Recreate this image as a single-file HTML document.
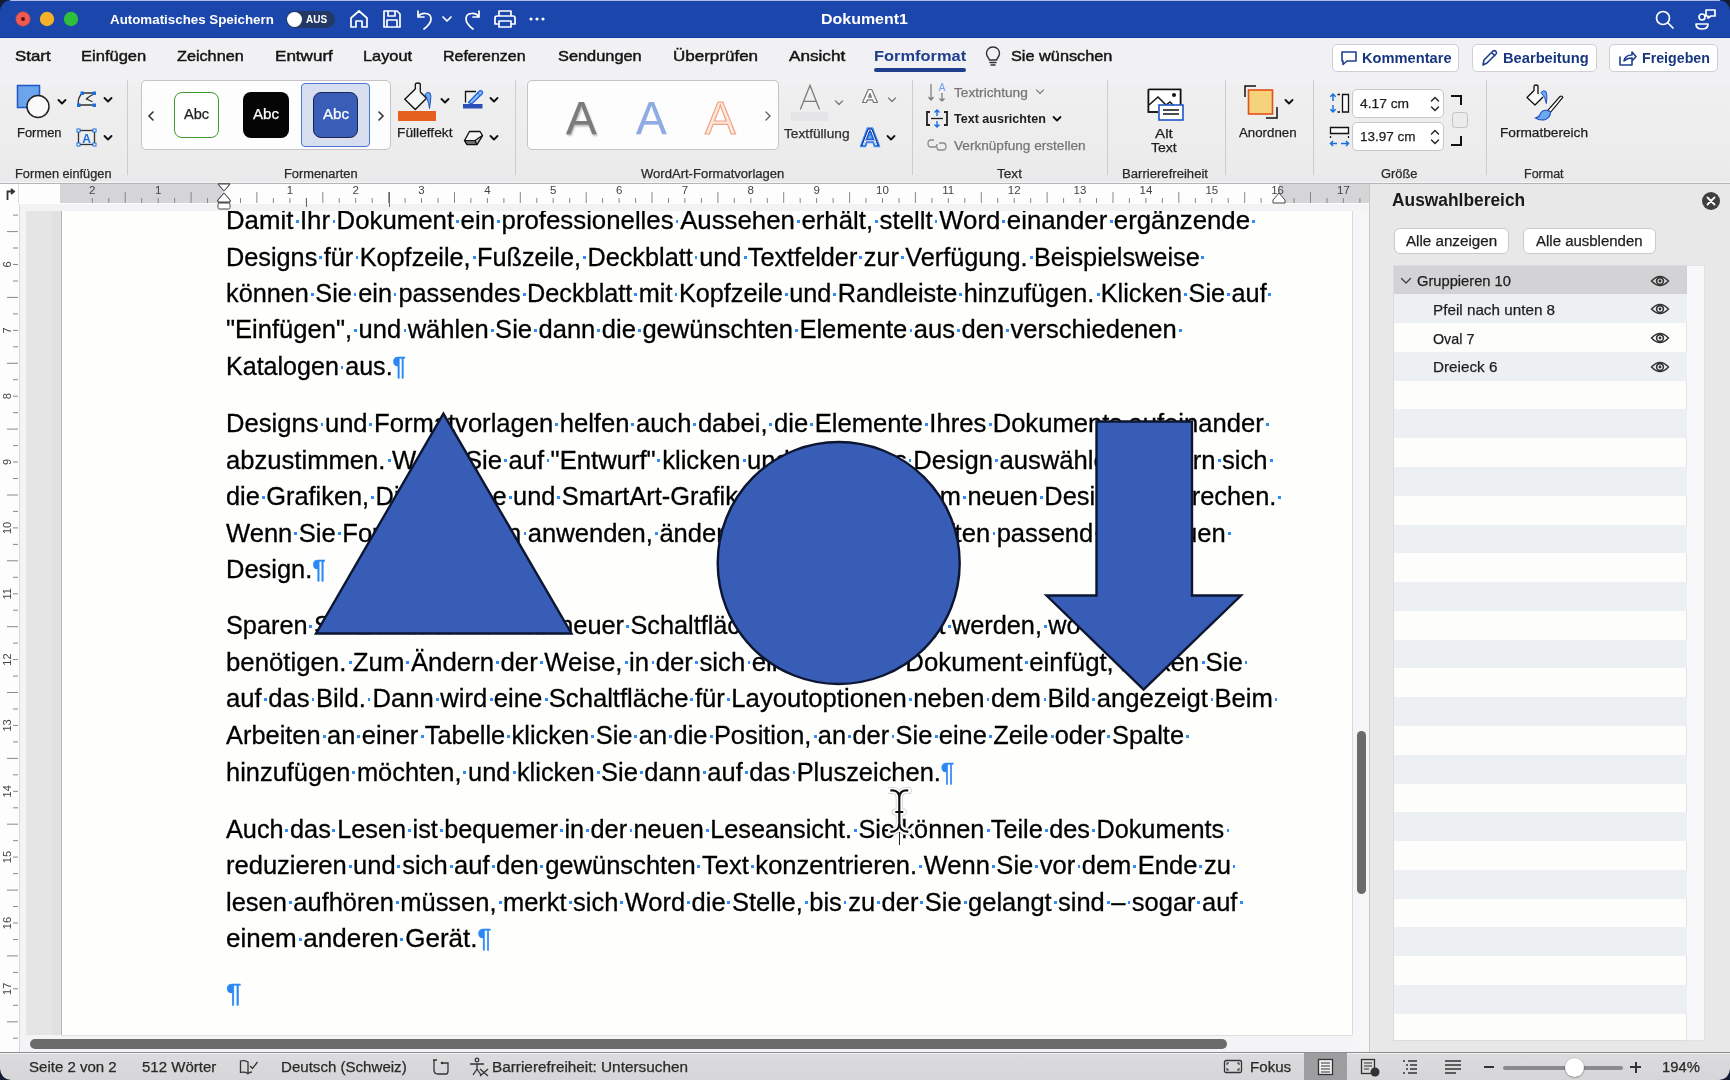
<!DOCTYPE html>
<html><head><meta charset="utf-8"><title>Word</title>
<style>
html,body{margin:0;padding:0}
body{width:1730px;height:1080px;overflow:hidden;position:relative;background:#e9e9e9;font-family:'Liberation Sans',sans-serif;}
i{display:inline-block;width:6.4px;height:3px;background:linear-gradient(90deg,transparent 2.1px,#2f8cf2 2.1px,#2f8cf2 4.9px,transparent 4.9px);vertical-align:6.3px}
i.p{display:inline;width:auto;height:auto;border:0;background:none;vertical-align:baseline;font-style:normal;color:#2a88f4;-webkit-text-stroke:0.4px #2a88f4}
#w{position:absolute;left:0;top:0;width:1730px;height:1080px;will-change:transform}
</style></head><body><div id="w">
<div style="position:absolute;left:0.0px;top:0.0px;width:1730.0px;height:38.0px;background:#1b46ab;"></div>
<div style="position:absolute;left:0.0px;top:37.0px;width:1730.0px;height:1.0px;background:#1538a0;"></div>
<svg style="position:absolute;left:14.0px;top:10.0px;" width="66" height="18" viewBox="0 0 66 18"><circle cx="9" cy="9" r="7.2" fill="#ee5a4f" stroke="#d0463c" stroke-width="0.6"/><circle cx="9" cy="9" r="2" fill="#5a1410"/><circle cx="33" cy="9" r="7.2" fill="#f5b12a"/><circle cx="57" cy="9" r="7.2" fill="#2fbf3c"/></svg>
<div id="f0" class="fit" style="position:absolute;left:110.0px;top:12.6px;font-size:13.50px;line-height:1;white-space:pre;color:#ffffff;font-weight:bold;transform:scaleX(0.9880);transform-origin:0 0;">Automatisches Speichern</div>
<div style="position:absolute;left:286.0px;top:11.0px;width:49.0px;height:17.0px;background:#243866;border-radius:9px;"></div>
<div style="position:absolute;left:287.0px;top:12.0px;width:15.0px;height:15.0px;background:#ffffff;border-radius:50%;"></div>
<div style="position:absolute;left:306.0px;top:15.0px;font-size:10.00px;line-height:1;white-space:pre;color:#ffffff;font-weight:bold;">AUS</div>
<svg style="position:absolute;left:348.0px;top:8.0px;" width="22" height="22" viewBox="0 0 22 22"><path d="M3 10 L11 3 L19 10 V19 H14 V13 H8 V19 H3 Z" fill="none" stroke="#ffffff" stroke-width="1.7" stroke-linejoin="round" stroke-linecap="round"/></svg>
<svg style="position:absolute;left:381.0px;top:8.0px;" width="22" height="22" viewBox="0 0 22 22"><path d="M3 3 H16 L19 6 V19 H3 Z M7 3 V8 H14 V3 M6 19 V12 H16 V19" fill="none" stroke="#ffffff" stroke-width="1.7" stroke-linejoin="round" stroke-linecap="round"/></svg>
<svg style="position:absolute;left:413.0px;top:7.0px;" width="24" height="24" viewBox="0 0 24 24"><path d="M5 4 V10 H11 M5 10 C8 5 18 5 18 12 C18 16 15 19 11 22" fill="none" stroke="#ffffff" stroke-width="1.7" stroke-linejoin="round" stroke-linecap="round"/></svg>
<svg style="position:absolute;left:441.0px;top:14.0px;" width="12" height="10" viewBox="0 0 12 10"><path d="M2 3 L6 7 L10 3" fill="none" stroke="#ffffff" stroke-width="1.7" stroke-linejoin="round" stroke-linecap="round"/></svg>
<svg style="position:absolute;left:460.0px;top:7.0px;" width="24" height="24" viewBox="0 0 24 24"><path d="M19 4 V10 H13 M19 10 C16 5 6 5 6 12 C6 16 9 19 13 22" fill="none" stroke="#ffffff" stroke-width="1.7" stroke-linejoin="round" stroke-linecap="round"/></svg>
<svg style="position:absolute;left:493.0px;top:8.0px;" width="24" height="22" viewBox="0 0 24 22"><path d="M6 8 V3 H18 V8 M4 8 H20 Q22 8 22 10 V16 H18 M6 16 H2 V10 Q2 8 4 8 M6 13 H18 V19 H6 Z" fill="none" stroke="#ffffff" stroke-width="1.7" stroke-linejoin="round" stroke-linecap="round"/></svg>
<svg style="position:absolute;left:528.0px;top:15.0px;" width="20" height="8" viewBox="0 0 20 8"><circle cx="3" cy="4" r="1.6" fill="#fff"/><circle cx="9" cy="4" r="1.6" fill="#fff"/><circle cx="15" cy="4" r="1.6" fill="#fff"/></svg>
<div id="f1" class="fit" style="position:absolute;left:821.0px;top:12.2px;font-size:14.50px;line-height:1;white-space:pre;color:#ffffff;font-weight:bold;transform:scaleX(1.1013);transform-origin:0 0;">Dokument1</div>
<svg style="position:absolute;left:1654.0px;top:9.0px;" width="22" height="22" viewBox="0 0 22 22"><circle cx="9" cy="9" r="6.5" fill="none" stroke="#ffffff" stroke-width="1.7" stroke-linejoin="round" stroke-linecap="round"/><path d="M14 14 L19 19" fill="none" stroke="#ffffff" stroke-width="1.7" stroke-linejoin="round" stroke-linecap="round"/></svg>
<svg style="position:absolute;left:1694.0px;top:7.0px;" width="24" height="24" viewBox="0 0 24 24"><circle cx="8" cy="10" r="3" fill="none" stroke="#ffffff" stroke-width="1.7" stroke-linejoin="round" stroke-linecap="round"/><path d="M2 17 H14 Q14 22 8 22 Q2 22 2 17 Z" fill="none" stroke="#ffffff" stroke-width="1.7" stroke-linejoin="round" stroke-linecap="round"/><path d="M12 3 H21 V9 H17 L14 11 V9 H12 Z" fill="none" stroke="#ffffff" stroke-width="1.7" stroke-linejoin="round" stroke-linecap="round"/></svg>
<div style="position:absolute;left:0.0px;top:38.0px;width:1730.0px;height:48.0px;background:#f1f1f3;"></div>
<div id="f2" class="fit" style="position:absolute;left:15.0px;top:47.7px;font-size:15.00px;line-height:1;white-space:pre;color:#141414;font-weight:normal;transform:scaleX(1.1250);transform-origin:0 0;-webkit-text-stroke:0.45px #141414;">Start</div>
<div id="f3" class="fit" style="position:absolute;left:81.0px;top:47.7px;font-size:15.00px;line-height:1;white-space:pre;color:#141414;font-weight:normal;transform:scaleX(1.1017);transform-origin:0 0;-webkit-text-stroke:0.45px #141414;">Einfügen</div>
<div id="f4" class="fit" style="position:absolute;left:177.0px;top:47.7px;font-size:15.00px;line-height:1;white-space:pre;color:#141414;font-weight:normal;transform:scaleX(1.0806);transform-origin:0 0;-webkit-text-stroke:0.45px #141414;">Zeichnen</div>
<div id="f5" class="fit" style="position:absolute;left:275.0px;top:47.7px;font-size:15.00px;line-height:1;white-space:pre;color:#141414;font-weight:normal;transform:scaleX(1.1373);transform-origin:0 0;-webkit-text-stroke:0.45px #141414;">Entwurf</div>
<div id="f6" class="fit" style="position:absolute;left:363.0px;top:47.7px;font-size:15.00px;line-height:1;white-space:pre;color:#141414;font-weight:normal;transform:scaleX(1.0889);transform-origin:0 0;-webkit-text-stroke:0.45px #141414;">Layout</div>
<div id="f7" class="fit" style="position:absolute;left:443.0px;top:47.7px;font-size:15.00px;line-height:1;white-space:pre;color:#141414;font-weight:normal;transform:scaleX(1.0641);transform-origin:0 0;-webkit-text-stroke:0.45px #141414;">Referenzen</div>
<div id="f8" class="fit" style="position:absolute;left:558.0px;top:47.7px;font-size:15.00px;line-height:1;white-space:pre;color:#141414;font-weight:normal;transform:scaleX(1.0909);transform-origin:0 0;-webkit-text-stroke:0.45px #141414;">Sendungen</div>
<div id="f9" class="fit" style="position:absolute;left:673.0px;top:47.7px;font-size:15.00px;line-height:1;white-space:pre;color:#141414;font-weight:normal;transform:scaleX(1.1333);transform-origin:0 0;-webkit-text-stroke:0.45px #141414;">Überprüfen</div>
<div id="f10" class="fit" style="position:absolute;left:789.0px;top:47.7px;font-size:15.00px;line-height:1;white-space:pre;color:#141414;font-weight:normal;transform:scaleX(1.1429);transform-origin:0 0;-webkit-text-stroke:0.45px #141414;">Ansicht</div>
<div id="f11" class="fit" style="position:absolute;left:874.0px;top:47.7px;font-size:15.00px;line-height:1;white-space:pre;color:#1f3f8e;font-weight:bold;transform:scaleX(1.0952);transform-origin:0 0;">Formformat</div>
<div style="position:absolute;left:874.0px;top:68.0px;width:92.0px;height:3.5px;background:#1f3f8e;border-radius:2px;"></div>
<svg style="position:absolute;left:984.0px;top:45.0px;" width="18" height="22" viewBox="0 0 18 22"><path d="M9 2 C4.5 2 2.5 5.5 2.5 8.5 C2.5 11.5 5 13 5.5 15 H12.5 C13 13 15.5 11.5 15.5 8.5 C15.5 5.5 13.5 2 9 2 Z M6 17.5 H12 M7 20 H11" fill="none" stroke="#333" stroke-width="1.4" stroke-linecap="round"/></svg>
<div id="f12" class="fit" style="position:absolute;left:1011.0px;top:47.7px;font-size:15.00px;line-height:1;white-space:pre;color:#141414;font-weight:normal;transform:scaleX(1.0860);transform-origin:0 0;-webkit-text-stroke:0.45px #141414;">Sie wünschen</div>
<div style="position:absolute;left:1332.0px;top:44.0px;width:127.0px;height:28.0px;background:#ffffff;box-sizing:border-box;border:1px solid #cfcfd3;border-radius:5px;"></div>
<div style="position:absolute;left:1472.0px;top:44.0px;width:125.0px;height:28.0px;background:#ffffff;box-sizing:border-box;border:1px solid #cfcfd3;border-radius:5px;"></div>
<div style="position:absolute;left:1609.0px;top:44.0px;width:109.0px;height:28.0px;background:#ffffff;box-sizing:border-box;border:1px solid #cfcfd3;border-radius:5px;"></div>
<svg style="position:absolute;left:1340.0px;top:49.0px;" width="18" height="18" viewBox="0 0 18 18"><path d="M2 3 H16 V12 H7 L3 15.5 V12 H2 Z" fill="none" stroke="#1f3f8e" stroke-width="1.6" stroke-linejoin="round" stroke-linecap="round"/></svg>
<div id="f13" class="fit" style="position:absolute;left:1362.0px;top:51.1px;font-size:14.00px;line-height:1;white-space:pre;color:#17367f;font-weight:bold;transform:scaleX(1.0465);transform-origin:0 0;">Kommentare</div>
<svg style="position:absolute;left:1479.0px;top:48.0px;" width="20" height="20" viewBox="0 0 20 20"><path d="M4 17 L5 12 L14 3 Q15.5 2 17 3.5 Q18 5 17 6 L8 15 Z M12.5 4.5 L15.8 7.6" fill="none" stroke="#1f3f8e" stroke-width="1.6" stroke-linejoin="round" stroke-linecap="round"/></svg>
<div id="f14" class="fit" style="position:absolute;left:1503.0px;top:51.1px;font-size:14.00px;line-height:1;white-space:pre;color:#17367f;font-weight:bold;transform:scaleX(1.0488);transform-origin:0 0;">Bearbeitung</div>
<svg style="position:absolute;left:1617.0px;top:48.0px;" width="20" height="20" viewBox="0 0 20 20"><path d="M3 9 V17 H15 V13 M7 13 Q8 7 15 7 V4 L19 8.5 L15 13 V10 Q10 10 7 13 Z" fill="none" stroke="#1f3f8e" stroke-width="1.6" stroke-linejoin="round" stroke-linecap="round"/></svg>
<div id="f15" class="fit" style="position:absolute;left:1642.0px;top:51.1px;font-size:14.00px;line-height:1;white-space:pre;color:#17367f;font-weight:bold;transform:scaleX(1.0149);transform-origin:0 0;">Freigeben</div>
<div style="position:absolute;left:0.0px;top:86.0px;width:1730.0px;height:96.0px;background:linear-gradient(#efefef,#ededed 55%,#eaeaec);"></div>
<div style="position:absolute;left:0.0px;top:182.0px;width:1730.0px;height:1.0px;background:#f6f6f6;"></div>
<div style="position:absolute;left:0.0px;top:183.0px;width:1730.0px;height:1.0px;background:#b4b4b6;"></div>
<div style="position:absolute;left:127.0px;top:80.0px;width:1.0px;height:95.0px;background:#cdcdcf;"></div>
<div style="position:absolute;left:515.0px;top:80.0px;width:1.0px;height:95.0px;background:#cdcdcf;"></div>
<div style="position:absolute;left:911.5px;top:80.0px;width:1.0px;height:95.0px;background:#cdcdcf;"></div>
<div style="position:absolute;left:1107.0px;top:80.0px;width:1.0px;height:95.0px;background:#cdcdcf;"></div>
<div style="position:absolute;left:1224.5px;top:80.0px;width:1.0px;height:95.0px;background:#cdcdcf;"></div>
<div style="position:absolute;left:1313.0px;top:80.0px;width:1.0px;height:95.0px;background:#cdcdcf;"></div>
<div style="position:absolute;left:1486.0px;top:80.0px;width:1.0px;height:95.0px;background:#cdcdcf;"></div>
<div id="f16" class="fit" style="position:absolute;left:15.0px;top:167.7px;font-size:12.50px;line-height:1;white-space:pre;color:#2a2a2a;font-weight:normal;transform:scaleX(1.0211);transform-origin:0 0;-webkit-text-stroke:0.25px #2a2a2a;">Formen einfügen</div>
<div id="f17" class="fit" style="position:absolute;left:284.0px;top:167.7px;font-size:12.50px;line-height:1;white-space:pre;color:#2a2a2a;font-weight:normal;transform:scaleX(1.0278);transform-origin:0 0;-webkit-text-stroke:0.25px #2a2a2a;">Formenarten</div>
<div id="f18" class="fit" style="position:absolute;left:641.0px;top:167.7px;font-size:12.50px;line-height:1;white-space:pre;color:#2a2a2a;font-weight:normal;transform:scaleX(1.0438);transform-origin:0 0;-webkit-text-stroke:0.25px #2a2a2a;">WordArt-Formatvorlagen</div>
<div id="f19" class="fit" style="position:absolute;left:997.0px;top:167.7px;font-size:12.50px;line-height:1;white-space:pre;color:#2a2a2a;font-weight:normal;transform:scaleX(1.0870);transform-origin:0 0;-webkit-text-stroke:0.25px #2a2a2a;">Text</div>
<div id="f20" class="fit" style="position:absolute;left:1122.0px;top:167.7px;font-size:12.50px;line-height:1;white-space:pre;color:#2a2a2a;font-weight:normal;transform:scaleX(1.0488);transform-origin:0 0;-webkit-text-stroke:0.25px #2a2a2a;">Barrierefreiheit</div>
<div id="f21" class="fit" style="position:absolute;left:1381.0px;top:167.7px;font-size:12.50px;line-height:1;white-space:pre;color:#2a2a2a;font-weight:normal;transform:scaleX(1.0286);transform-origin:0 0;-webkit-text-stroke:0.25px #2a2a2a;">Größe</div>
<div id="f22" class="fit" style="position:absolute;left:1524.0px;top:167.7px;font-size:12.50px;line-height:1;white-space:pre;color:#2a2a2a;font-weight:normal;transform:scaleX(1.0000);transform-origin:0 0;-webkit-text-stroke:0.25px #2a2a2a;">Format</div>
<svg style="position:absolute;left:15.0px;top:83.0px;" width="40" height="40" viewBox="0 0 40 40"><rect x="2.5" y="2.5" width="22" height="22" fill="#6aa5ee" stroke="#1f56c8" stroke-width="1.5"/><circle cx="23" cy="23.5" r="11" fill="#fafafa" stroke="#222" stroke-width="1.5"/></svg>
<svg style="position:absolute;left:57.0px;top:98.0px;" width="10" height="8" viewBox="0 0 10 8"><path d="M1.5 2 L5 5.5 L8.5 2" fill="none" stroke="#111" stroke-width="1.9" stroke-linecap="round" stroke-linejoin="round"/></svg>
<svg style="position:absolute;left:74.0px;top:88.0px;" width="26" height="22" viewBox="0 0 26 22"><path d="M8 5 H18.5 M19 6.5 Q14 9 12.5 11 L18 13.5 M7 6.5 Q3.5 11 4.5 16.5 M6 17 H18.5" fill="none" stroke="#333" stroke-width="1.3" stroke-linecap="round"/><rect x="6.5" y="3.5" width="3.5" height="3.5" fill="#1a6fe0"/><rect x="18.5" y="3.5" width="3.5" height="3.5" fill="#1a6fe0"/><rect x="3" y="15.5" width="3.5" height="3.5" fill="#1a6fe0"/><rect x="18.5" y="15.5" width="3.5" height="3.5" fill="#1a6fe0"/></svg>
<svg style="position:absolute;left:103.0px;top:96.0px;" width="10" height="8" viewBox="0 0 10 8"><path d="M1.5 2 L5 5.5 L8.5 2" fill="none" stroke="#111" stroke-width="1.9" stroke-linecap="round" stroke-linejoin="round"/></svg>
<div id="f23" class="fit" style="position:absolute;left:17.0px;top:126.1px;font-size:13.50px;line-height:1;white-space:pre;color:#1d1d1d;font-weight:normal;transform:scaleX(0.9574);transform-origin:0 0;-webkit-text-stroke:0.25px #1d1d1d;">Formen</div>
<svg style="position:absolute;left:76.0px;top:128.0px;" width="22" height="19" viewBox="0 0 22 19"><rect x="2.5" y="2.5" width="16" height="14" fill="none" stroke="#333" stroke-width="1.3"/><text x="10.5" y="14.5" font-size="12" font-weight="bold" text-anchor="middle" fill="#1a6fe0" font-family="Liberation Sans">A</text><rect x="1" y="1" width="3" height="3" fill="#fff" stroke="#1a6fe0" stroke-width="1"/><rect x="17" y="1" width="3" height="3" fill="#fff" stroke="#1a6fe0" stroke-width="1"/><rect x="1" y="15" width="3" height="3" fill="#fff" stroke="#1a6fe0" stroke-width="1"/><rect x="17" y="15" width="3" height="3" fill="#fff" stroke="#1a6fe0" stroke-width="1"/></svg>
<svg style="position:absolute;left:103.0px;top:134.0px;" width="10" height="8" viewBox="0 0 10 8"><path d="M1.5 2 L5 5.5 L8.5 2" fill="none" stroke="#111" stroke-width="1.9" stroke-linecap="round" stroke-linejoin="round"/></svg>
<div style="position:absolute;left:141.0px;top:80.0px;width:250.0px;height:70.0px;background:#fdfdfd;box-sizing:border-box;border:1px solid #c4c4c6;border-radius:5px;"></div>
<svg style="position:absolute;left:146.0px;top:110.0px;" width="10" height="12" viewBox="0 0 10 12"><path d="M7 2 L3 6 L7 10" fill="none" stroke="#333" stroke-width="1.6" stroke-linecap="round"/></svg>
<svg style="position:absolute;left:376.0px;top:110.0px;" width="10" height="12" viewBox="0 0 10 12"><path d="M3 2 L7 6 L3 10" fill="none" stroke="#333" stroke-width="1.6" stroke-linecap="round"/></svg>
<div style="position:absolute;left:174.0px;top:92.0px;width:45.0px;height:46.0px;background:#ffffff;box-sizing:border-box;border:1.5px solid #3f9a2e;border-radius:8px;"></div>
<div id="f24" class="fit" style="position:absolute;left:184.0px;top:107.1px;font-size:14.00px;line-height:1;white-space:pre;color:#1d1d1d;font-weight:normal;transform:scaleX(1.0417);transform-origin:0 0;-webkit-text-stroke:0.25px #1d1d1d;">Abc</div>
<div style="position:absolute;left:243.0px;top:92.0px;width:46.0px;height:46.0px;background:#050505;border-radius:8px;"></div>
<div id="f25" class="fit" style="position:absolute;left:253.0px;top:107.1px;font-size:14.00px;line-height:1;white-space:pre;color:#ffffff;font-weight:normal;transform:scaleX(1.0833);transform-origin:0 0;-webkit-text-stroke:0.25px #ffffff;">Abc</div>
<div style="position:absolute;left:301.0px;top:83.0px;width:69.0px;height:64.0px;background:#d6def0;box-sizing:border-box;border:1.2px solid #4a78d0;border-radius:4px;"></div>
<div style="position:absolute;left:313.0px;top:92.0px;width:45.0px;height:46.0px;background:#3a5eb8;box-sizing:border-box;border:1.5px solid #1a2650;border-radius:8px;"></div>
<div id="f26" class="fit" style="position:absolute;left:323.0px;top:107.1px;font-size:14.00px;line-height:1;white-space:pre;color:#ffffff;font-weight:normal;transform:scaleX(1.0833);transform-origin:0 0;-webkit-text-stroke:0.25px #ffffff;">Abc</div>
<svg style="position:absolute;left:390.0px;top:78.0px;" width="50" height="36" viewBox="0 0 50 36"><path d="M15 11 L25.5 21.5 L15 32 L4.5 21.5 Z" fill="none"/><path d="M25.3 13.5 V6.5 Q25.3 5 27.8 5 Q30.3 5 30.3 6.5 V18.7" fill="none" stroke="#111" stroke-width="1.3"/><path d="M25.3 11 L14.8 21.2 L25.3 31.5 L36.5 20.2 L30.3 14" fill="#f7f7f7" stroke="#111" stroke-width="1.4" stroke-linejoin="miter"/><path d="M35 16.5 Q37.5 13 40 15 Q41.5 17.5 40.5 23 L39.5 30.5 Q38.8 25 37.5 22 Q36.5 19 35 16.5 Z" fill="#6aaaf0" stroke="#1f4fc0" stroke-width="1"/></svg>
<div style="position:absolute;left:398.0px;top:111.0px;width:38.0px;height:9.5px;background:#e5601e;"></div>
<svg style="position:absolute;left:440.0px;top:97.0px;" width="10" height="8" viewBox="0 0 10 8"><path d="M1.5 2 L5 5.5 L8.5 2" fill="none" stroke="#111" stroke-width="1.9" stroke-linecap="round" stroke-linejoin="round"/></svg>
<div id="f27" class="fit" style="position:absolute;left:397.0px;top:126.1px;font-size:13.50px;line-height:1;white-space:pre;color:#1d1d1d;font-weight:normal;transform:scaleX(1.0182);transform-origin:0 0;-webkit-text-stroke:0.25px #1d1d1d;">Fülleffekt</div>
<svg style="position:absolute;left:460.0px;top:86.0px;" width="28" height="26" viewBox="0 0 28 26"><path d="M5.5 16.5 V5.5 H16" fill="none" stroke="#111" stroke-width="1.3"/><path d="M8.5 16.5 L19 5.5 Q20.5 4 22 5.2 Q23.3 6.5 22 8 L11.5 18 Z" fill="#8cc0f5" stroke="#1a5fd8" stroke-width="1.3" stroke-linejoin="round"/><path d="M17.5 7 L20.5 10" stroke="#1a5fd8" stroke-width="1"/><rect x="3" y="18" width="19.5" height="4.5" fill="#2a50b8"/></svg>
<svg style="position:absolute;left:489.0px;top:96.0px;" width="10" height="8" viewBox="0 0 10 8"><path d="M1.5 2 L5 5.5 L8.5 2" fill="none" stroke="#111" stroke-width="1.9" stroke-linecap="round" stroke-linejoin="round"/></svg>
<svg style="position:absolute;left:460.0px;top:128.0px;" width="26" height="20" viewBox="0 0 26 20"><path d="M4.5 12.5 L9.5 3.5 H20 L22.5 7.5 L17 16.5 H7 Z" fill="#f6f6f6" stroke="#111" stroke-width="1.4" stroke-linejoin="round"/><path d="M4.5 12.5 H15 L17 16.5 H7 Z" fill="#6e6e6e" stroke="#111" stroke-width="1.2" stroke-linejoin="round"/><path d="M15 12.5 L22.5 7.5 L17 16.5 Z" fill="#c9c9c9" stroke="#111" stroke-width="1.2" stroke-linejoin="round"/></svg>
<svg style="position:absolute;left:489.0px;top:134.0px;" width="10" height="8" viewBox="0 0 10 8"><path d="M1.5 2 L5 5.5 L8.5 2" fill="none" stroke="#111" stroke-width="1.9" stroke-linecap="round" stroke-linejoin="round"/></svg>
<div style="position:absolute;left:527.0px;top:80.0px;width:252.0px;height:70.0px;background:#fdfdfd;box-sizing:border-box;border:1px solid #c4c4c6;border-radius:5px;"></div>
<div style="position:absolute;left:566.0px;top:95.1px;font-size:46.00px;line-height:1;white-space:pre;color:#7b7b7b;font-weight:normal;text-shadow:1px 2px 2px rgba(0,0,0,.25);-webkit-text-stroke:0.25px #7b7b7b;">A</div>
<div style="position:absolute;left:636.0px;top:95.1px;font-size:46.00px;line-height:1;white-space:pre;color:#8eabe3;font-weight:normal;-webkit-text-stroke:0.25px #8eabe3;">A</div>
<div style="position:absolute;left:705.0px;top:95.1px;font-size:46.00px;line-height:1;white-space:pre;color:#fde8de;font-weight:normal;-webkit-text-stroke:1.2px #f2a487;">A</div>
<svg style="position:absolute;left:763.0px;top:110.0px;" width="10" height="12" viewBox="0 0 10 12"><path d="M3 2 L7 6 L3 10" fill="none" stroke="#666" stroke-width="1.4" stroke-linecap="round"/></svg>
<svg style="position:absolute;left:796.0px;top:82.0px;" width="30" height="30" viewBox="0 0 30 30"><path d="M4.3 27.6 L14 3.2 L23.5 27.6 M8 19.3 H20" fill="none" stroke="#7a7a7a" stroke-width="1.3"/></svg>
<div style="position:absolute;left:791.0px;top:111.5px;width:37.0px;height:9.5px;background:#e5e5e7;"></div>
<svg style="position:absolute;left:833.5px;top:98.5px;" width="10" height="8" viewBox="0 0 10 8"><path d="M1.5 2 L5 5.5 L8.5 2" fill="none" stroke="#7a7a7a" stroke-width="1.3" stroke-linecap="round" stroke-linejoin="round"/></svg>
<div id="f28" class="fit" style="position:absolute;left:784.0px;top:126.6px;font-size:13.50px;line-height:1;white-space:pre;color:#2e2e2e;font-weight:normal;transform:scaleX(1.0154);transform-origin:0 0;-webkit-text-stroke:0.25px #2e2e2e;">Textfüllung</div>
<svg style="position:absolute;left:860.0px;top:87.0px;" width="20" height="18" viewBox="0 0 20 18"><path d="M2.5 15.5 L8.3 2.5 H11.7 L17.5 15.5 H13.6 L12.5 12.8 H7.5 L6.4 15.5 Z M8.6 10.2 H11.4 L10 6.5 Z" fill="#fafafa" stroke="#777" stroke-width="1.2" stroke-linejoin="round"/></svg>
<svg style="position:absolute;left:886.5px;top:96.0px;" width="10" height="8" viewBox="0 0 10 8"><path d="M1.5 2 L5 5.5 L8.5 2" fill="none" stroke="#7a7a7a" stroke-width="1.3" stroke-linecap="round" stroke-linejoin="round"/></svg>
<svg style="position:absolute;left:858.0px;top:125.0px;" width="24" height="24" viewBox="0 0 24 24"><path d="M2.5 21.5 L9.5 3 H14.5 L21.5 21.5 H16.5 L15 17.5 H9 L7.5 21.5 Z M10.2 13.5 H13.8 L12 8.5 Z" fill="#1d4fc4" stroke="#3f8df0" stroke-width="1.6" stroke-linejoin="round"/><path d="M5.3 19.8 L10.8 4.8 H13.2 L18.7 19.8 H17.6 L16.1 15.8 H7.9 L6.4 19.8 Z" fill="none" stroke="#fff" stroke-width="1"/><path d="M3.5 21 L10 4 H14 L20.5 21" fill="none" stroke="#0b2a86" stroke-width="0.8"/></svg>
<svg style="position:absolute;left:886.0px;top:134.0px;" width="10" height="8" viewBox="0 0 10 8"><path d="M1.5 2 L5 5.5 L8.5 2" fill="none" stroke="#111" stroke-width="1.8" stroke-linecap="round" stroke-linejoin="round"/></svg>
<svg style="position:absolute;left:926.0px;top:81.0px;" width="22" height="22" viewBox="0 0 22 22"><path d="M5 3 V19 M2.5 16 L5 19 L7.5 16 M16 12 V20 M13.5 17.5 L16 20 L18.5 17.5" fill="none" stroke="#777" stroke-width="1.2"/><text x="16" y="10" font-size="10" text-anchor="middle" fill="#6aa0ee" font-family="Liberation Sans">A</text></svg>
<div id="f29" class="fit" style="position:absolute;left:954.0px;top:85.6px;font-size:13.50px;line-height:1;white-space:pre;color:#757575;font-weight:normal;transform:scaleX(1.0137);transform-origin:0 0;-webkit-text-stroke:0.25px #757575;">Textrichtung</div>
<svg style="position:absolute;left:1035.0px;top:88.0px;" width="10" height="8" viewBox="0 0 10 8"><path d="M1.5 2 L5 5.5 L8.5 2" fill="none" stroke="#888" stroke-width="1.3" stroke-linecap="round" stroke-linejoin="round"/></svg>
<svg style="position:absolute;left:925.0px;top:108.0px;" width="24" height="22" viewBox="0 0 24 22"><path d="M5 4 H2 V17 H5 M19 4 H22 V17 H19" fill="none" stroke="#222" stroke-width="1.8"/><path d="M6 10.5 H18" stroke="#222" stroke-width="1.3"/><path d="M12 2 V8 M9.5 4.5 L12 2 L14.5 4.5 M12 13 V19 M9.5 16.5 L12 19 L14.5 16.5" fill="none" stroke="#1a6fe0" stroke-width="1.4"/></svg>
<div id="f30" class="fit" style="position:absolute;left:954.0px;top:112.1px;font-size:13.50px;line-height:1;white-space:pre;color:#1d1d1d;font-weight:bold;transform:scaleX(0.9293);transform-origin:0 0;">Text ausrichten</div>
<svg style="position:absolute;left:1052.0px;top:115.0px;" width="10" height="8" viewBox="0 0 10 8"><path d="M1.5 2 L5 5.5 L8.5 2" fill="none" stroke="#111" stroke-width="1.8" stroke-linecap="round" stroke-linejoin="round"/></svg>
<svg style="position:absolute;left:926.0px;top:137.0px;" width="22" height="16" viewBox="0 0 22 16"><path d="M8 3 H5 Q2 3 2 6.5 Q2 10 5 10 H9 Q11 10 11 7 M13 6 H17 Q20 6 20 9.5 Q20 13 17 13 H13 Q11 13 11 10" fill="none" stroke="#8a8a8a" stroke-width="1.3"/></svg>
<div id="f31" class="fit" style="position:absolute;left:954.0px;top:138.6px;font-size:13.50px;line-height:1;white-space:pre;color:#757575;font-weight:normal;transform:scaleX(1.0076);transform-origin:0 0;-webkit-text-stroke:0.25px #757575;">Verknüpfung erstellen</div>
<svg style="position:absolute;left:1146.0px;top:87.0px;" width="40" height="36" viewBox="0 0 40 36"><path d="M2.5 2.5 H34.5 V22 M2.5 2.5 V25 H12" fill="#fff" stroke="#111" stroke-width="1.6"/><rect x="3" y="3" width="31" height="21" fill="#fff"/><path d="M2.5 2.5 H34.5 V18 M2.5 2.5 V25 H12" fill="none" stroke="#111" stroke-width="1.6"/><path d="M3 18 L12 10 L20 18 L24 15 L28 19" fill="none" stroke="#111" stroke-width="1.5"/><circle cx="28" cy="8" r="2" fill="#111"/><rect x="13" y="18" width="24" height="15" fill="#fff" stroke="#1f56c8" stroke-width="1.6"/><path d="M17 23 H33 M17 27 H33" stroke="#111" stroke-width="1.4"/></svg>
<div id="f32" class="fit" style="position:absolute;left:1155.0px;top:126.6px;font-size:13.50px;line-height:1;white-space:pre;color:#1d1d1d;font-weight:normal;transform:scaleX(1.1250);transform-origin:0 0;-webkit-text-stroke:0.25px #1d1d1d;">Alt</div>
<div id="f33" class="fit" style="position:absolute;left:1151.0px;top:140.6px;font-size:13.50px;line-height:1;white-space:pre;color:#1d1d1d;font-weight:normal;transform:scaleX(1.0400);transform-origin:0 0;-webkit-text-stroke:0.25px #1d1d1d;">Text</div>
<svg style="position:absolute;left:1242.0px;top:83.0px;" width="38" height="38" viewBox="0 0 38 38"><path d="M3 14 V3 H14" fill="none" stroke="#111" stroke-width="1.5"/><path d="M35 24 V35 H24" fill="none" stroke="#111" stroke-width="1.5"/><rect x="6.5" y="7" width="24" height="24" fill="#f6d27a" stroke="#e2501c" stroke-width="1.6"/></svg>
<svg style="position:absolute;left:1284.0px;top:98.0px;" width="10" height="8" viewBox="0 0 10 8"><path d="M1.5 2 L5 5.5 L8.5 2" fill="none" stroke="#111" stroke-width="1.9" stroke-linecap="round" stroke-linejoin="round"/></svg>
<div id="f34" class="fit" style="position:absolute;left:1239.0px;top:126.1px;font-size:13.50px;line-height:1;white-space:pre;color:#1d1d1d;font-weight:normal;transform:scaleX(0.9831);transform-origin:0 0;-webkit-text-stroke:0.25px #1d1d1d;">Anordnen</div>
<svg style="position:absolute;left:1328.0px;top:91.0px;" width="24" height="24" viewBox="0 0 24 24"><path d="M5 3 V10 M2.3 5.7 L5 3 L7.7 5.7 M5 14 V21 M2.3 18.3 L5 21 L7.7 18.3" fill="none" stroke="#1a6fe0" stroke-width="1.5"/><path d="M14.5 3.5 H20.5 V21 H14.5 Z" fill="#fafafa" stroke="#111" stroke-width="1.3"/><path d="M9.5 3.5 H12 M9.5 21 H12" stroke="#111" stroke-width="1.3"/></svg>
<svg style="position:absolute;left:1328.0px;top:125.0px;" width="24" height="24" viewBox="0 0 24 24"><path d="M2.5 2.5 H20.5 V8.5 H2.5 Z" fill="#fafafa" stroke="#111" stroke-width="1.3"/><path d="M2.5 11 V14 M20.5 11 V14" stroke="#111" stroke-width="1.2" stroke-dasharray="2 1"/><path d="M2.5 18.5 H9 M5 16 L2.5 18.5 L5 21 M13 18.5 H20.5 M18 16 L20.5 18.5 L18 21" fill="none" stroke="#1a6fe0" stroke-width="1.5"/></svg>
<div style="position:absolute;left:1352.0px;top:89.0px;width:92.0px;height:29.0px;background:#ffffff;box-sizing:border-box;border:1px solid #c8c8ca;border-radius:5px;"></div>
<div id="f35" class="fit" style="position:absolute;left:1360.0px;top:97.1px;font-size:13.50px;line-height:1;white-space:pre;color:#1d1d1d;font-weight:normal;transform:scaleX(1.0208);transform-origin:0 0;-webkit-text-stroke:0.25px #1d1d1d;">4.17 cm</div>
<svg style="position:absolute;left:1428.0px;top:93.0px;" width="14" height="22" viewBox="0 0 14 22"><path d="M3.5 8 L7 4.5 L10.5 8 M3.5 14 L7 17.5 L10.5 14" fill="none" stroke="#222" stroke-width="1.4" stroke-linecap="round"/></svg>
<div style="position:absolute;left:1352.0px;top:122.0px;width:92.0px;height:29.0px;background:#ffffff;box-sizing:border-box;border:1px solid #c8c8ca;border-radius:5px;"></div>
<div id="f36" class="fit" style="position:absolute;left:1360.0px;top:130.1px;font-size:13.50px;line-height:1;white-space:pre;color:#1d1d1d;font-weight:normal;transform:scaleX(1.0000);transform-origin:0 0;-webkit-text-stroke:0.25px #1d1d1d;">13.97 cm</div>
<svg style="position:absolute;left:1428.0px;top:126.0px;" width="14" height="22" viewBox="0 0 14 22"><path d="M3.5 8 L7 4.5 L10.5 8 M3.5 14 L7 17.5 L10.5 14" fill="none" stroke="#222" stroke-width="1.4" stroke-linecap="round"/></svg>
<svg style="position:absolute;left:1448.0px;top:93.0px;overflow:visible" width="18" height="56" viewBox="0 0 18 56"><path d="M3 3 H13 V12 M3 52 H13 V43" fill="none" stroke="#111" stroke-width="2"/><rect x="4.5" y="19.5" width="15" height="15" rx="3" fill="#ebebeb" stroke="#c2c2c4" stroke-width="1"/></svg>
<svg style="position:absolute;left:1522.0px;top:83.0px;" width="46" height="40" viewBox="0 0 46 40"><path d="M 16 11 V 3.5 Q 16 2 14 2 Q 12 2 12 3.5 V 7.5 L 5 14.5 L 13 22 L 21 14" fill="#f8f8f8" stroke="#111" stroke-width="1.3" stroke-linejoin="round"/><path d="M 19 9.5 Q 21.5 6.5 24 8.5 Q 25.5 12 24.3 20.5 Q 23.2 15 21.3 12.5 Q 20.3 11 19 9.5 Z" fill="#6aaaf0" stroke="#1f4fc0" stroke-width="1"/><path d="M 38 13.5 Q 40 12.5 40.8 14.5 L 28.5 29.3 L 25.8 27.3 Z" fill="#fff" stroke="#111" stroke-width="1.2"/><path d="M 25.8 27.3 Q 19.5 26.5 18 31.5 Q 17 34.3 13.5 35 Q 18 38 23.5 36.5 Q 28.5 34 28.5 29.3 Z" fill="#6aaaf0" stroke="#1f4fc0" stroke-width="1.1"/></svg>
<div id="f37" class="fit" style="position:absolute;left:1500.0px;top:126.1px;font-size:13.50px;line-height:1;white-space:pre;color:#1d1d1d;font-weight:normal;transform:scaleX(1.0115);transform-origin:0 0;-webkit-text-stroke:0.25px #1d1d1d;">Formatbereich</div>
<div style="position:absolute;left:0.0px;top:184.0px;width:1369.0px;height:19.5px;background:#fdfdfd;"></div>
<div style="position:absolute;left:60.0px;top:184.0px;width:163.5px;height:19.0px;background:#d5d5d7;"></div>
<div style="position:absolute;left:1278.5px;top:184.0px;width:90.5px;height:19.0px;background:#d5d5d7;"></div>
<div style="position:absolute;left:18.0px;top:184.0px;width:1.0px;height:19.0px;background:#dcdcdc;"></div>
<svg style="position:absolute;left:3.0px;top:186.0px;" width="14" height="16" viewBox="0 0 14 16"><path d="M4.5 14 V5.5 H10 M8 3 L11 5.5 L8 8" fill="none" stroke="#333" stroke-width="1.8"/></svg>
<svg style="position:absolute;left:0.0px;top:184.0px;" width="1369" height="20" viewBox="0 0 1369 20"><text x="92.3" y="10.3" font-size="11.5" text-anchor="middle" fill="#444" font-family="Liberation Sans">2</text><path d="M92.3 14 V19" stroke="#888" stroke-width="1"/><path d="M108.8 14 V19" stroke="#888" stroke-width="1"/><path d="M125.2 8 V19" stroke="#888" stroke-width="1"/><path d="M141.7 14 V19" stroke="#888" stroke-width="1"/><text x="158.2" y="10.3" font-size="11.5" text-anchor="middle" fill="#444" font-family="Liberation Sans">1</text><path d="M158.2 14 V19" stroke="#888" stroke-width="1"/><path d="M174.6 14 V19" stroke="#888" stroke-width="1"/><path d="M191.1 8 V19" stroke="#888" stroke-width="1"/><path d="M207.5 14 V19" stroke="#888" stroke-width="1"/><path d="M240.5 14 V19" stroke="#888" stroke-width="1"/><path d="M256.9 8 V19" stroke="#888" stroke-width="1"/><path d="M273.4 14 V19" stroke="#888" stroke-width="1"/><text x="289.9" y="10.3" font-size="11.5" text-anchor="middle" fill="#444" font-family="Liberation Sans">1</text><path d="M289.9 14 V19" stroke="#888" stroke-width="1"/><path d="M306.3 14 V19" stroke="#888" stroke-width="1"/><path d="M322.8 8 V19" stroke="#888" stroke-width="1"/><path d="M339.2 14 V19" stroke="#888" stroke-width="1"/><text x="355.7" y="10.3" font-size="11.5" text-anchor="middle" fill="#444" font-family="Liberation Sans">2</text><path d="M355.7 14 V19" stroke="#888" stroke-width="1"/><path d="M372.2 14 V19" stroke="#888" stroke-width="1"/><path d="M388.6 8 V19" stroke="#888" stroke-width="1"/><path d="M405.1 14 V19" stroke="#888" stroke-width="1"/><text x="421.5" y="10.3" font-size="11.5" text-anchor="middle" fill="#444" font-family="Liberation Sans">3</text><path d="M421.5 14 V19" stroke="#888" stroke-width="1"/><path d="M438.0 14 V19" stroke="#888" stroke-width="1"/><path d="M454.5 8 V19" stroke="#888" stroke-width="1"/><path d="M470.9 14 V19" stroke="#888" stroke-width="1"/><text x="487.4" y="10.3" font-size="11.5" text-anchor="middle" fill="#444" font-family="Liberation Sans">4</text><path d="M487.4 14 V19" stroke="#888" stroke-width="1"/><path d="M503.9 14 V19" stroke="#888" stroke-width="1"/><path d="M520.3 8 V19" stroke="#888" stroke-width="1"/><path d="M536.8 14 V19" stroke="#888" stroke-width="1"/><text x="553.2" y="10.3" font-size="11.5" text-anchor="middle" fill="#444" font-family="Liberation Sans">5</text><path d="M553.2 14 V19" stroke="#888" stroke-width="1"/><path d="M569.7 14 V19" stroke="#888" stroke-width="1"/><path d="M586.2 8 V19" stroke="#888" stroke-width="1"/><path d="M602.6 14 V19" stroke="#888" stroke-width="1"/><text x="619.1" y="10.3" font-size="11.5" text-anchor="middle" fill="#444" font-family="Liberation Sans">6</text><path d="M619.1 14 V19" stroke="#888" stroke-width="1"/><path d="M635.6 14 V19" stroke="#888" stroke-width="1"/><path d="M652.0 8 V19" stroke="#888" stroke-width="1"/><path d="M668.5 14 V19" stroke="#888" stroke-width="1"/><text x="684.9" y="10.3" font-size="11.5" text-anchor="middle" fill="#444" font-family="Liberation Sans">7</text><path d="M684.9 14 V19" stroke="#888" stroke-width="1"/><path d="M701.4 14 V19" stroke="#888" stroke-width="1"/><path d="M717.9 8 V19" stroke="#888" stroke-width="1"/><path d="M734.3 14 V19" stroke="#888" stroke-width="1"/><text x="750.8" y="10.3" font-size="11.5" text-anchor="middle" fill="#444" font-family="Liberation Sans">8</text><path d="M750.8 14 V19" stroke="#888" stroke-width="1"/><path d="M767.3 14 V19" stroke="#888" stroke-width="1"/><path d="M783.7 8 V19" stroke="#888" stroke-width="1"/><path d="M800.2 14 V19" stroke="#888" stroke-width="1"/><text x="816.6" y="10.3" font-size="11.5" text-anchor="middle" fill="#444" font-family="Liberation Sans">9</text><path d="M816.6 14 V19" stroke="#888" stroke-width="1"/><path d="M833.1 14 V19" stroke="#888" stroke-width="1"/><path d="M849.6 8 V19" stroke="#888" stroke-width="1"/><path d="M866.0 14 V19" stroke="#888" stroke-width="1"/><text x="882.5" y="10.3" font-size="11.5" text-anchor="middle" fill="#444" font-family="Liberation Sans">10</text><path d="M882.5 14 V19" stroke="#888" stroke-width="1"/><path d="M899.0 14 V19" stroke="#888" stroke-width="1"/><path d="M915.4 8 V19" stroke="#888" stroke-width="1"/><path d="M931.9 14 V19" stroke="#888" stroke-width="1"/><text x="948.3" y="10.3" font-size="11.5" text-anchor="middle" fill="#444" font-family="Liberation Sans">11</text><path d="M948.3 14 V19" stroke="#888" stroke-width="1"/><path d="M964.8 14 V19" stroke="#888" stroke-width="1"/><path d="M981.3 8 V19" stroke="#888" stroke-width="1"/><path d="M997.7 14 V19" stroke="#888" stroke-width="1"/><text x="1014.2" y="10.3" font-size="11.5" text-anchor="middle" fill="#444" font-family="Liberation Sans">12</text><path d="M1014.2 14 V19" stroke="#888" stroke-width="1"/><path d="M1030.7 14 V19" stroke="#888" stroke-width="1"/><path d="M1047.1 8 V19" stroke="#888" stroke-width="1"/><path d="M1063.6 14 V19" stroke="#888" stroke-width="1"/><text x="1080.0" y="10.3" font-size="11.5" text-anchor="middle" fill="#444" font-family="Liberation Sans">13</text><path d="M1080.0 14 V19" stroke="#888" stroke-width="1"/><path d="M1096.5 14 V19" stroke="#888" stroke-width="1"/><path d="M1113.0 8 V19" stroke="#888" stroke-width="1"/><path d="M1129.4 14 V19" stroke="#888" stroke-width="1"/><text x="1145.9" y="10.3" font-size="11.5" text-anchor="middle" fill="#444" font-family="Liberation Sans">14</text><path d="M1145.9 14 V19" stroke="#888" stroke-width="1"/><path d="M1162.4 14 V19" stroke="#888" stroke-width="1"/><path d="M1178.8 8 V19" stroke="#888" stroke-width="1"/><path d="M1195.3 14 V19" stroke="#888" stroke-width="1"/><text x="1211.8" y="10.3" font-size="11.5" text-anchor="middle" fill="#444" font-family="Liberation Sans">15</text><path d="M1211.8 14 V19" stroke="#888" stroke-width="1"/><path d="M1228.2 14 V19" stroke="#888" stroke-width="1"/><path d="M1244.7 8 V19" stroke="#888" stroke-width="1"/><path d="M1261.1 14 V19" stroke="#888" stroke-width="1"/><text x="1277.6" y="10.3" font-size="11.5" text-anchor="middle" fill="#444" font-family="Liberation Sans">16</text><path d="M1277.6 14 V19" stroke="#888" stroke-width="1"/><path d="M1294.1 14 V19" stroke="#888" stroke-width="1"/><path d="M1310.5 8 V19" stroke="#888" stroke-width="1"/><path d="M1327.0 14 V19" stroke="#888" stroke-width="1"/><text x="1343.4" y="10.3" font-size="11.5" text-anchor="middle" fill="#444" font-family="Liberation Sans">17</text><path d="M1343.4 14 V19" stroke="#888" stroke-width="1"/><path d="M1359.9 14 V19" stroke="#888" stroke-width="1"/></svg>
<div style="position:absolute;left:0.0px;top:203.5px;width:1369.0px;height:849.0px;background:#f4f4f6;"></div>
<div style="position:absolute;left:0.0px;top:203.5px;width:18.5px;height:849.0px;background:#fdfdfd;"></div>
<div style="position:absolute;left:18.5px;top:203.5px;width:1.0px;height:849.0px;background:#d8d8da;"></div>
<svg style="position:absolute;left:0.0px;top:203.5px;overflow:hidden" width="19" height="849" viewBox="0 0 19 849"><path d="M13 11.1 H18" stroke="#888" stroke-width="1"/><path d="M7 27.6 H18" stroke="#888" stroke-width="1"/><path d="M13 44.0 H18" stroke="#888" stroke-width="1"/><text transform="translate(10.5 60.5) rotate(-90)" font-size="11" text-anchor="middle" fill="#444" font-family="Liberation Sans">6</text><path d="M13 60.5 H18" stroke="#888" stroke-width="1"/><path d="M13 77.0 H18" stroke="#888" stroke-width="1"/><path d="M7 93.4 H18" stroke="#888" stroke-width="1"/><path d="M13 109.9 H18" stroke="#888" stroke-width="1"/><text transform="translate(10.5 126.4) rotate(-90)" font-size="11" text-anchor="middle" fill="#444" font-family="Liberation Sans">7</text><path d="M13 126.4 H18" stroke="#888" stroke-width="1"/><path d="M13 142.8 H18" stroke="#888" stroke-width="1"/><path d="M7 159.3 H18" stroke="#888" stroke-width="1"/><path d="M13 175.7 H18" stroke="#888" stroke-width="1"/><text transform="translate(10.5 192.2) rotate(-90)" font-size="11" text-anchor="middle" fill="#444" font-family="Liberation Sans">8</text><path d="M13 192.2 H18" stroke="#888" stroke-width="1"/><path d="M13 208.7 H18" stroke="#888" stroke-width="1"/><path d="M7 225.1 H18" stroke="#888" stroke-width="1"/><path d="M13 241.6 H18" stroke="#888" stroke-width="1"/><text transform="translate(10.5 258.0) rotate(-90)" font-size="11" text-anchor="middle" fill="#444" font-family="Liberation Sans">9</text><path d="M13 258.0 H18" stroke="#888" stroke-width="1"/><path d="M13 274.5 H18" stroke="#888" stroke-width="1"/><path d="M7 291.0 H18" stroke="#888" stroke-width="1"/><path d="M13 307.4 H18" stroke="#888" stroke-width="1"/><text transform="translate(10.5 323.9) rotate(-90)" font-size="11" text-anchor="middle" fill="#444" font-family="Liberation Sans">10</text><path d="M13 323.9 H18" stroke="#888" stroke-width="1"/><path d="M13 340.4 H18" stroke="#888" stroke-width="1"/><path d="M7 356.8 H18" stroke="#888" stroke-width="1"/><path d="M13 373.3 H18" stroke="#888" stroke-width="1"/><text transform="translate(10.5 389.8) rotate(-90)" font-size="11" text-anchor="middle" fill="#444" font-family="Liberation Sans">11</text><path d="M13 389.8 H18" stroke="#888" stroke-width="1"/><path d="M13 406.2 H18" stroke="#888" stroke-width="1"/><path d="M7 422.7 H18" stroke="#888" stroke-width="1"/><path d="M13 439.1 H18" stroke="#888" stroke-width="1"/><text transform="translate(10.5 455.6) rotate(-90)" font-size="11" text-anchor="middle" fill="#444" font-family="Liberation Sans">12</text><path d="M13 455.6 H18" stroke="#888" stroke-width="1"/><path d="M13 472.1 H18" stroke="#888" stroke-width="1"/><path d="M7 488.5 H18" stroke="#888" stroke-width="1"/><path d="M13 505.0 H18" stroke="#888" stroke-width="1"/><text transform="translate(10.5 521.4) rotate(-90)" font-size="11" text-anchor="middle" fill="#444" font-family="Liberation Sans">13</text><path d="M13 521.4 H18" stroke="#888" stroke-width="1"/><path d="M13 537.9 H18" stroke="#888" stroke-width="1"/><path d="M7 554.4 H18" stroke="#888" stroke-width="1"/><path d="M13 570.8 H18" stroke="#888" stroke-width="1"/><text transform="translate(10.5 587.3) rotate(-90)" font-size="11" text-anchor="middle" fill="#444" font-family="Liberation Sans">14</text><path d="M13 587.3 H18" stroke="#888" stroke-width="1"/><path d="M13 603.8 H18" stroke="#888" stroke-width="1"/><path d="M7 620.2 H18" stroke="#888" stroke-width="1"/><path d="M13 636.7 H18" stroke="#888" stroke-width="1"/><text transform="translate(10.5 653.1) rotate(-90)" font-size="11" text-anchor="middle" fill="#444" font-family="Liberation Sans">15</text><path d="M13 653.1 H18" stroke="#888" stroke-width="1"/><path d="M13 669.6 H18" stroke="#888" stroke-width="1"/><path d="M7 686.1 H18" stroke="#888" stroke-width="1"/><path d="M13 702.5 H18" stroke="#888" stroke-width="1"/><text transform="translate(10.5 719.0) rotate(-90)" font-size="11" text-anchor="middle" fill="#444" font-family="Liberation Sans">16</text><path d="M13 719.0 H18" stroke="#888" stroke-width="1"/><path d="M13 735.5 H18" stroke="#888" stroke-width="1"/><path d="M7 751.9 H18" stroke="#888" stroke-width="1"/><path d="M13 768.4 H18" stroke="#888" stroke-width="1"/><text transform="translate(10.5 784.8) rotate(-90)" font-size="11" text-anchor="middle" fill="#444" font-family="Liberation Sans">17</text><path d="M13 784.8 H18" stroke="#888" stroke-width="1"/><path d="M13 801.3 H18" stroke="#888" stroke-width="1"/><path d="M7 817.8 H18" stroke="#888" stroke-width="1"/><path d="M13 834.2 H18" stroke="#888" stroke-width="1"/></svg>
<div style="position:absolute;left:26.0px;top:211.0px;width:35.5px;height:824.0px;background:#e5e5e6;"></div>
<div style="position:absolute;left:52.0px;top:211.0px;width:9.5px;height:824.0px;background:#e1e1e2;"></div>
<div style="position:absolute;left:61.0px;top:211.0px;width:1.2px;height:824.0px;background:#b4b4b6;"></div>
<div style="position:absolute;left:62.0px;top:211.0px;width:1290.0px;height:824.0px;background:#fefefc;"></div>
<div style="position:absolute;left:1351.5px;top:211.0px;width:1.0px;height:824.0px;background:#d9d9db;"></div>
<div style="position:absolute;left:1352.5px;top:211.0px;width:16.0px;height:841.0px;background:#f6f6f8;"></div>
<div style="position:absolute;left:62.0px;top:1034.5px;width:1290.0px;height:1.0px;background:#dedee0;"></div>
<div style="position:absolute;left:1356.5px;top:731.0px;width:9.0px;height:163.0px;background:#6b6b6b;border-radius:5px;"></div>
<div style="position:absolute;left:30.0px;top:1039.0px;width:1197.0px;height:10.0px;background:#6b6b6b;border-radius:5px;"></div>
<div style="position:absolute;left:1368.5px;top:184.0px;width:1.0px;height:868.0px;background:#c9c9cb;"></div>
<div style="position:absolute;left:306.0px;top:198.0px;width:1.0px;height:9.0px;background:#666;"></div>
<div style="position:absolute;left:388.5px;top:192.0px;width:1.5px;height:15.0px;background:#666;"></div>
<svg style="position:absolute;left:216.0px;top:183.0px;" width="16" height="28" viewBox="0 0 16 28"><path d="M2 1 H14 L8 8 Z M8 10 L14 17 V19 H2 V17 Z" fill="#fff" stroke="#444" stroke-width="1"/><rect x="2" y="20" width="12" height="6" rx="1.5" fill="#fff" stroke="#444" stroke-width="1"/></svg>
<svg style="position:absolute;left:1271.0px;top:192.0px;" width="16" height="12" viewBox="0 0 16 12"><path d="M8 1 L14 8 V11 H2 V8 Z" fill="#fff" stroke="#444" stroke-width="1"/></svg>
<div style="position:absolute;left:1369.5px;top:184.0px;width:360.5px;height:868.0px;background:#e8e8e8;"></div>
<div id="f38" class="fit" style="position:absolute;left:1392.0px;top:192.2px;font-size:17.50px;line-height:1;white-space:pre;color:#1a1a1a;font-weight:bold;transform:scaleX(0.9925);transform-origin:0 0;">Auswahlbereich</div>
<svg style="position:absolute;left:1701.0px;top:191.0px;" width="20" height="20" viewBox="0 0 20 20"><circle cx="10" cy="10" r="9" fill="#3f3f3f"/><path d="M6.5 6.5 L13.5 13.5 M13.5 6.5 L6.5 13.5" stroke="#fff" stroke-width="1.8" stroke-linecap="round"/></svg>
<div style="position:absolute;left:1394.0px;top:228.0px;width:115.0px;height:26.0px;background:#ffffff;box-sizing:border-box;border:1px solid #cacacc;border-radius:6px;"></div>
<div id="f39" class="fit" style="position:absolute;left:1406.0px;top:234.1px;font-size:14.00px;line-height:1;white-space:pre;color:#1d1d1d;font-weight:normal;transform:scaleX(1.0833);transform-origin:0 0;-webkit-text-stroke:0.25px #1d1d1d;">Alle anzeigen</div>
<div style="position:absolute;left:1523.0px;top:228.0px;width:133.0px;height:26.0px;background:#ffffff;box-sizing:border-box;border:1px solid #cacacc;border-radius:6px;"></div>
<div id="f40" class="fit" style="position:absolute;left:1536.0px;top:234.1px;font-size:14.00px;line-height:1;white-space:pre;color:#1d1d1d;font-weight:normal;transform:scaleX(1.0700);transform-origin:0 0;-webkit-text-stroke:0.25px #1d1d1d;">Alle ausblenden</div>
<div style="position:absolute;left:1394.0px;top:265.5px;width:293.0px;height:774.0px;background:#fdfdfc;box-shadow:0 0 0 1px #dcdcde;"></div>
<div style="position:absolute;left:1687.0px;top:265.5px;width:17.0px;height:774.0px;background:#f8f8fa;box-shadow:0 0 0 1px #e2e2e4;"></div>
<div style="position:absolute;left:1394.0px;top:265.5px;width:293.0px;height:29.0px;background:#d3d3d5;"></div>
<div style="position:absolute;left:1394.0px;top:294.3px;width:293.0px;height:28.8px;background:#edf0f3;"></div>
<div style="position:absolute;left:1394.0px;top:351.8px;width:293.0px;height:28.8px;background:#edf0f3;"></div>
<div style="position:absolute;left:1394.0px;top:409.4px;width:293.0px;height:28.8px;background:#edf0f3;"></div>
<div style="position:absolute;left:1394.0px;top:467.0px;width:293.0px;height:28.8px;background:#edf0f3;"></div>
<div style="position:absolute;left:1394.0px;top:524.5px;width:293.0px;height:28.8px;background:#edf0f3;"></div>
<div style="position:absolute;left:1394.0px;top:582.1px;width:293.0px;height:28.8px;background:#edf0f3;"></div>
<div style="position:absolute;left:1394.0px;top:639.6px;width:293.0px;height:28.8px;background:#edf0f3;"></div>
<div style="position:absolute;left:1394.0px;top:697.2px;width:293.0px;height:28.8px;background:#edf0f3;"></div>
<div style="position:absolute;left:1394.0px;top:754.8px;width:293.0px;height:28.8px;background:#edf0f3;"></div>
<div style="position:absolute;left:1394.0px;top:812.3px;width:293.0px;height:28.8px;background:#edf0f3;"></div>
<div style="position:absolute;left:1394.0px;top:869.9px;width:293.0px;height:28.8px;background:#edf0f3;"></div>
<div style="position:absolute;left:1394.0px;top:927.4px;width:293.0px;height:28.8px;background:#edf0f3;"></div>
<div style="position:absolute;left:1394.0px;top:985.0px;width:293.0px;height:28.8px;background:#edf0f3;"></div>
<div id="f41" class="fit" style="position:absolute;left:1417.0px;top:273.3px;font-size:15.00px;line-height:1;white-space:pre;color:#1d1d1d;font-weight:normal;transform:scaleX(0.9792);transform-origin:0 0;-webkit-text-stroke:0.25px #1d1d1d;">Gruppieren 10</div>
<svg style="position:absolute;left:1650.0px;top:273.5px;" width="20" height="14" viewBox="0 0 20 14"><path d="M1.5 7 Q10 -2 18.5 7 Q10 16 1.5 7 Z" fill="none" stroke="#333" stroke-width="1.4"/><circle cx="10" cy="7" r="3.4" fill="none" stroke="#333" stroke-width="1.6"/><circle cx="10" cy="7" r="1.4" fill="#333"/></svg>
<div id="f42" class="fit" style="position:absolute;left:1433.0px;top:301.9px;font-size:15.00px;line-height:1;white-space:pre;color:#1d1d1d;font-weight:normal;transform:scaleX(1.0167);transform-origin:0 0;-webkit-text-stroke:0.25px #1d1d1d;">Pfeil nach unten 8</div>
<svg style="position:absolute;left:1650.0px;top:302.2px;" width="20" height="14" viewBox="0 0 20 14"><path d="M1.5 7 Q10 -2 18.5 7 Q10 16 1.5 7 Z" fill="none" stroke="#333" stroke-width="1.4"/><circle cx="10" cy="7" r="3.4" fill="none" stroke="#333" stroke-width="1.6"/><circle cx="10" cy="7" r="1.4" fill="#333"/></svg>
<div id="f43" class="fit" style="position:absolute;left:1433.0px;top:330.5px;font-size:15.00px;line-height:1;white-space:pre;color:#1d1d1d;font-weight:normal;transform:scaleX(0.9535);transform-origin:0 0;-webkit-text-stroke:0.25px #1d1d1d;">Oval 7</div>
<svg style="position:absolute;left:1650.0px;top:331.0px;" width="20" height="14" viewBox="0 0 20 14"><path d="M1.5 7 Q10 -2 18.5 7 Q10 16 1.5 7 Z" fill="none" stroke="#333" stroke-width="1.4"/><circle cx="10" cy="7" r="3.4" fill="none" stroke="#333" stroke-width="1.6"/><circle cx="10" cy="7" r="1.4" fill="#333"/></svg>
<div id="f44" class="fit" style="position:absolute;left:1433.0px;top:359.1px;font-size:15.00px;line-height:1;white-space:pre;color:#1d1d1d;font-weight:normal;transform:scaleX(1.0159);transform-origin:0 0;-webkit-text-stroke:0.25px #1d1d1d;">Dreieck 6</div>
<svg style="position:absolute;left:1650.0px;top:359.8px;" width="20" height="14" viewBox="0 0 20 14"><path d="M1.5 7 Q10 -2 18.5 7 Q10 16 1.5 7 Z" fill="none" stroke="#333" stroke-width="1.4"/><circle cx="10" cy="7" r="3.4" fill="none" stroke="#333" stroke-width="1.6"/><circle cx="10" cy="7" r="1.4" fill="#333"/></svg>
<svg style="position:absolute;left:1400.0px;top:276.0px;" width="12" height="10" viewBox="0 0 12 10"><path d="M1.5 2.5 L6 7 L10.5 2.5" fill="none" stroke="#444" stroke-width="1.4" stroke-linecap="round"/></svg>
<div style="position:absolute;left:0.0px;top:1053.0px;width:1730.0px;height:27.0px;background:linear-gradient(#dcdcde,#d6d6d8);"></div>
<div style="position:absolute;left:0.0px;top:1051.5px;width:1730.0px;height:1.5px;background:#8c8c8e;"></div>
<div style="position:absolute;left:0.0px;top:1053.0px;width:1730.0px;height:1.0px;background:#f2f2f2;"></div>
<div id="f45" class="fit" style="position:absolute;left:29.0px;top:1059.6px;font-size:14.00px;line-height:1;white-space:pre;color:#2a2a2a;font-weight:normal;transform:scaleX(1.0732);transform-origin:0 0;-webkit-text-stroke:0.25px #2a2a2a;">Seite 2 von 2</div>
<div id="f46" class="fit" style="position:absolute;left:142.0px;top:1059.6px;font-size:14.00px;line-height:1;white-space:pre;color:#2a2a2a;font-weight:normal;transform:scaleX(1.0725);transform-origin:0 0;-webkit-text-stroke:0.25px #2a2a2a;">512 Wörter</div>
<div id="f47" class="fit" style="position:absolute;left:281.0px;top:1059.6px;font-size:14.00px;line-height:1;white-space:pre;color:#2a2a2a;font-weight:normal;transform:scaleX(1.0769);transform-origin:0 0;-webkit-text-stroke:0.25px #2a2a2a;">Deutsch (Schweiz)</div>
<div id="f48" class="fit" style="position:absolute;left:492.0px;top:1059.6px;font-size:14.00px;line-height:1;white-space:pre;color:#2a2a2a;font-weight:normal;transform:scaleX(1.0950);transform-origin:0 0;-webkit-text-stroke:0.25px #2a2a2a;">Barrierefreiheit: Untersuchen</div>
<div id="f49" class="fit" style="position:absolute;left:1250.0px;top:1059.6px;font-size:14.00px;line-height:1;white-space:pre;color:#2a2a2a;font-weight:normal;transform:scaleX(1.0789);transform-origin:0 0;-webkit-text-stroke:0.25px #2a2a2a;">Fokus</div>
<div id="f50" class="fit" style="position:absolute;left:1662.0px;top:1059.6px;font-size:14.00px;line-height:1;white-space:pre;color:#2a2a2a;font-weight:normal;transform:scaleX(1.0556);transform-origin:0 0;-webkit-text-stroke:0.25px #2a2a2a;">194%</div>
<svg style="position:absolute;left:238.0px;top:1057.0px;" width="22" height="20" viewBox="0 0 22 20"><path d="M2.5 4 Q6 3 10 5 V16.5 Q6 14.5 2.5 15.5 Z M10 5 V16.5 Q12 15 14 15" fill="none" stroke="#333" stroke-width="1.3"/><path d="M12 9 L14.5 11.5 L19.5 5" fill="none" stroke="#333" stroke-width="1.3"/></svg>
<svg style="position:absolute;left:430.0px;top:1057.0px;" width="20" height="20" viewBox="0 0 20 20"><path d="M4 3 V13 M3 3 H7 M4 13 Q4 17 8 17 H16 Q18 17 18 14 V6 H11" fill="none" stroke="#333" stroke-width="1.3"/><circle cx="12" cy="6" r="1.3" fill="#333"/></svg>
<svg style="position:absolute;left:468.0px;top:1057.0px;" width="22" height="20" viewBox="0 0 22 20"><circle cx="9" cy="3" r="1.8" fill="none" stroke="#333" stroke-width="1.3"/><path d="M2 7 H16 M9 7 V12 L5 18 M9 12 L13 18" fill="none" stroke="#333" stroke-width="1.3"/><path d="M12 12 L20 19 M20 12 L12 19" fill="none" stroke="#333" stroke-width="1.3"/></svg>
<svg style="position:absolute;left:1222.0px;top:1058.0px;" width="22" height="18" viewBox="0 0 22 18"><rect x="2.5" y="2.5" width="17" height="12" rx="1.5" fill="none" stroke="#333" stroke-width="1.3"/><path d="M5 7 V5 H7 M15 5 H17 V7 M17 10 V12 H15 M7 12 H5 V10" fill="none" stroke="#333" stroke-width="1.1"/></svg>
<div style="position:absolute;left:1304.0px;top:1053.0px;width:43.0px;height:27.0px;background:#9e9ea0;"></div>
<svg style="position:absolute;left:1316.0px;top:1057.0px;" width="20" height="20" viewBox="0 0 20 20"><rect x="2.5" y="2.5" width="14" height="15" fill="#f2f2f2" stroke="#333" stroke-width="1.3"/><path d="M5 6 H14 M5 9 H14 M5 12 H14 M5 15 H14" stroke="#333" stroke-width="1.1"/></svg>
<svg style="position:absolute;left:1359.0px;top:1057.0px;" width="22" height="20" viewBox="0 0 22 20"><rect x="2.5" y="2.5" width="13" height="14" fill="none" stroke="#333" stroke-width="1.3"/><path d="M5 6 H13 M5 9 H13 M5 12 H10" stroke="#333" stroke-width="1.1"/><circle cx="16" cy="15" r="4.5" fill="#333"/></svg>
<svg style="position:absolute;left:1400.0px;top:1058.0px;" width="20" height="18" viewBox="0 0 20 18"><path d="M3 3 H5 M8 3 H17 M6 7 H8 M10 7 H17 M6 11 H8 M10 11 H17 M3 15 H5 M8 15 H17" stroke="#333" stroke-width="1.3"/></svg>
<svg style="position:absolute;left:1443.0px;top:1058.0px;" width="20" height="18" viewBox="0 0 20 18"><path d="M2 3 H18 M2 7 H18 M2 11 H18 M2 15 H13" stroke="#333" stroke-width="1.4"/></svg>
<div style="position:absolute;left:1484.0px;top:1066.0px;width:10.0px;height:2.0px;background:#333;"></div>
<div style="position:absolute;left:1503.0px;top:1065.5px;width:120.0px;height:4.0px;background:#8a8a8c;border-radius:2px;"></div>
<div style="position:absolute;left:1565.0px;top:1058.0px;width:19.0px;height:19.0px;background:#ffffff;border-radius:50%;box-shadow:0 0.5px 2px rgba(0,0,0,.45);"></div>
<div style="position:absolute;left:1630.0px;top:1066.0px;width:11.0px;height:2.0px;background:#333;"></div>
<div style="position:absolute;left:1634.5px;top:1061.5px;width:2.0px;height:11.0px;background:#333;"></div>
<div id="f51" class="fit" style="position:absolute;left:225.9px;top:208.0px;font-size:25.20px;line-height:1;white-space:pre;color:#000;font-weight:normal;transform:scaleX(1.0238);transform-origin:0 0;z-index:1;-webkit-text-stroke:0.3px #000;">Damit<i></i>Ihr<i></i>Dokument<i></i>ein<i></i>professionelles<i></i>Aussehen<i></i>erhält,<i></i>stellt<i></i>Word<i></i>einander<i></i>ergänzende<i></i></div>
<div id="f52" class="fit" style="position:absolute;left:225.9px;top:244.5px;font-size:25.20px;line-height:1;white-space:pre;color:#000;font-weight:normal;transform:scaleX(1.0034);transform-origin:0 0;z-index:1;-webkit-text-stroke:0.3px #000;">Designs<i></i>für<i></i>Kopfzeile,<i></i>Fußzeile,<i></i>Deckblatt<i></i>und<i></i>Textfelder<i></i>zur<i></i>Verfügung.<i></i>Beispielsweise<i></i></div>
<div id="f53" class="fit" style="position:absolute;left:225.9px;top:280.9px;font-size:25.20px;line-height:1;white-space:pre;color:#000;font-weight:normal;transform:scaleX(1.0032);transform-origin:0 0;z-index:1;-webkit-text-stroke:0.3px #000;">können<i></i>Sie<i></i>ein<i></i>passendes<i></i>Deckblatt<i></i>mit<i></i>Kopfzeile<i></i>und<i></i>Randleiste<i></i>hinzufügen.<i></i>Klicken<i></i>Sie<i></i>auf<i></i></div>
<div id="f54" class="fit" style="position:absolute;left:225.9px;top:317.4px;font-size:25.20px;line-height:1;white-space:pre;color:#000;font-weight:normal;transform:scaleX(1.0141);transform-origin:0 0;z-index:1;-webkit-text-stroke:0.3px #000;">&quot;Einfügen&quot;,<i></i>und<i></i>wählen<i></i>Sie<i></i>dann<i></i>die<i></i>gewünschten<i></i>Elemente<i></i>aus<i></i>den<i></i>verschiedenen<i></i></div>
<div id="f55" class="fit" style="position:absolute;left:225.9px;top:353.8px;font-size:25.20px;line-height:1;white-space:pre;color:#000;font-weight:normal;transform:scaleX(0.9950);transform-origin:0 0;z-index:1;-webkit-text-stroke:0.3px #000;">Katalogen<i></i>aus.<i class="p">¶</i></div>
<div id="f56" class="fit" style="position:absolute;left:225.9px;top:411.2px;font-size:25.20px;line-height:1;white-space:pre;color:#000;font-weight:normal;transform:scaleX(1.0156);transform-origin:0 0;z-index:1;-webkit-text-stroke:0.3px #000;">Designs<i></i>und<i></i>Formatvorlagen<i></i>helfen<i></i>auch<i></i>dabei,<i></i>die<i></i>Elemente<i></i>Ihres<i></i>Dokuments<i></i>aufeinander<i></i></div>
<div id="f57" class="fit" style="position:absolute;left:225.9px;top:447.6px;font-size:25.20px;line-height:1;white-space:pre;color:#000;font-weight:normal;transform:scaleX(1.0172);transform-origin:0 0;z-index:1;-webkit-text-stroke:0.3px #000;">abzustimmen.<i></i>Wenn<i></i>Sie<i></i>auf<i></i>&quot;Entwurf&quot;<i></i>klicken<i></i>und<i></i>ein<i></i>neues<i></i>Design<i></i>auswählen,<i></i>ändern<i></i>sich<i></i></div>
<div id="f58" class="fit" style="position:absolute;left:225.9px;top:484.0px;font-size:25.20px;line-height:1;white-space:pre;color:#000;font-weight:normal;transform:scaleX(1.0066);transform-origin:0 0;z-index:1;-webkit-text-stroke:0.3px #000;">die<i></i>Grafiken,<i></i>Diagramme<i></i>und<i></i>SmartArt-Grafiken<i></i>so,<i></i>dass<i></i>sie<i></i>dem<i></i>neuen<i></i>Design<i></i>entsprechen.<i></i></div>
<div id="f59" class="fit" style="position:absolute;left:225.9px;top:520.5px;font-size:25.20px;line-height:1;white-space:pre;color:#000;font-weight:normal;transform:scaleX(1.0151);transform-origin:0 0;z-index:1;-webkit-text-stroke:0.3px #000;">Wenn<i></i>Sie<i></i>Formatvorlagen<i></i>anwenden,<i></i>ändern<i></i>sich<i></i>die<i></i>Überschriften<i></i>passend<i></i>zum<i></i>neuen<i></i></div>
<div id="f60" class="fit" style="position:absolute;left:225.9px;top:556.9px;font-size:25.20px;line-height:1;white-space:pre;color:#000;font-weight:normal;transform:scaleX(1.0111);transform-origin:0 0;z-index:1;-webkit-text-stroke:0.3px #000;">Design.<i class="p">¶</i></div>
<div style="position:absolute;left:225.9px;top:613.0px;font-size:25.20px;line-height:1;white-space:pre;color:#000;transform:scaleX(1.0040);transform-origin:0 0;z-index:1;-webkit-text-stroke:0.3px #000;">Sparen<i></i>Sie<i></i>Zeit<i></i>in<i></i>Word<i></i>dank<i></i>neuer<i></i>Schaltflächen,<i></i>die<i></i>angezeigt<i></i>werden,<i></i>wo<i></i>Sie<i></i>sie<i></i></div>
<div id="f61" class="fit" style="position:absolute;left:225.9px;top:649.7px;font-size:25.20px;line-height:1;white-space:pre;color:#000;font-weight:normal;transform:scaleX(1.0226);transform-origin:0 0;z-index:1;-webkit-text-stroke:0.3px #000;">benötigen.<i></i>Zum<i></i>Ändern<i></i>der<i></i>Weise,<i></i>in<i></i>der<i></i>sich<i></i>ein<i></i>Bild<i></i>in<i></i>Ihr<i></i>Dokument<i></i>einfügt,<i></i>klicken<i></i>Sie<i></i></div>
<div id="f62" class="fit" style="position:absolute;left:225.9px;top:686.3px;font-size:25.20px;line-height:1;white-space:pre;color:#000;font-weight:normal;transform:scaleX(1.0180);transform-origin:0 0;z-index:1;-webkit-text-stroke:0.3px #000;">auf<i></i>das<i></i>Bild.<i></i>Dann<i></i>wird<i></i>eine<i></i>Schaltfläche<i></i>für<i></i>Layoutoptionen<i></i>neben<i></i>dem<i></i>Bild<i></i>angezeigt<i></i>Beim<i></i></div>
<div id="f63" class="fit" style="position:absolute;left:225.9px;top:723.0px;font-size:25.20px;line-height:1;white-space:pre;color:#000;font-weight:normal;transform:scaleX(1.0083);transform-origin:0 0;z-index:1;-webkit-text-stroke:0.3px #000;">Arbeiten<i></i>an<i></i>einer<i></i>Tabelle<i></i>klicken<i></i>Sie<i></i>an<i></i>die<i></i>Position,<i></i>an<i></i>der<i></i>Sie<i></i>eine<i></i>Zeile<i></i>oder<i></i>Spalte<i></i></div>
<div id="f64" class="fit" style="position:absolute;left:225.9px;top:759.7px;font-size:25.20px;line-height:1;white-space:pre;color:#000;font-weight:normal;transform:scaleX(1.0098);transform-origin:0 0;z-index:1;-webkit-text-stroke:0.3px #000;">hinzufügen<i></i>möchten,<i></i>und<i></i>klicken<i></i>Sie<i></i>dann<i></i>auf<i></i>das<i></i>Pluszeichen.<i class="p">¶</i></div>
<div id="f65" class="fit" style="position:absolute;left:225.9px;top:816.9px;font-size:25.20px;line-height:1;white-space:pre;color:#000;font-weight:normal;transform:scaleX(1.0035);transform-origin:0 0;z-index:1;-webkit-text-stroke:0.3px #000;">Auch<i></i>das<i></i>Lesen<i></i>ist<i></i>bequemer<i></i>in<i></i>der<i></i>neuen<i></i>Leseansicht.<i></i>Sie<i></i>können<i></i>Teile<i></i>des<i></i>Dokuments<i></i></div>
<div id="f66" class="fit" style="position:absolute;left:225.9px;top:853.3px;font-size:25.20px;line-height:1;white-space:pre;color:#000;font-weight:normal;transform:scaleX(1.0136);transform-origin:0 0;z-index:1;-webkit-text-stroke:0.3px #000;">reduzieren<i></i>und<i></i>sich<i></i>auf<i></i>den<i></i>gewünschten<i></i>Text<i></i>konzentrieren.<i></i>Wenn<i></i>Sie<i></i>vor<i></i>dem<i></i>Ende<i></i>zu<i></i></div>
<div id="f67" class="fit" style="position:absolute;left:225.9px;top:889.6px;font-size:25.20px;line-height:1;white-space:pre;color:#000;font-weight:normal;transform:scaleX(1.0106);transform-origin:0 0;z-index:1;-webkit-text-stroke:0.3px #000;">lesen<i></i>aufhören<i></i>müssen,<i></i>merkt<i></i>sich<i></i>Word<i></i>die<i></i>Stelle,<i></i>bis<i></i>zu<i></i>der<i></i>Sie<i></i>gelangt<i></i>sind<i></i>–<i></i>sogar<i></i>auf<i></i></div>
<div id="f68" class="fit" style="position:absolute;left:225.9px;top:926.0px;font-size:25.20px;line-height:1;white-space:pre;color:#000;font-weight:normal;transform:scaleX(1.0315);transform-origin:0 0;z-index:1;-webkit-text-stroke:0.3px #000;">einem<i></i>anderen<i></i>Gerät.<i class="p">¶</i></div>
<div id="f69" class="fit" style="position:absolute;left:225.9px;top:980.7px;font-size:25.20px;line-height:1;white-space:pre;color:#000;font-weight:normal;transform:scaleX(1.1500);transform-origin:0 0;z-index:1;-webkit-text-stroke:0.3px #000;"><i class="p">¶</i></div>
<svg style="position:absolute;left:0.0px;top:0.0px;z-index:2;" width="1369" height="1052" viewBox="0 0 1369 1052"><path d="M443.4 413.6 L571.5 633.5 L316 633.5 Z" fill="#375db7" stroke="#0d1630" stroke-width="2.4" stroke-linejoin="miter"/><circle cx="838.7" cy="563" r="121" fill="#375db7" stroke="#0d1630" stroke-width="2.4"/><path d="M1096.5 421.5 H1192 V595.5 H1241 L1143.6 689.5 L1046.5 595.5 H1096.5 Z" fill="#375db7" stroke="#0d1630" stroke-width="2.4" stroke-linejoin="miter"/></svg>
<svg style="position:absolute;left:888.0px;top:786.0px;z-index:3;" width="24" height="62" viewBox="0 0 24 62"><path d="M2.3 4.5 Q11.3 3.5 11.3 12 V37.5 Q11.3 45.5 2.3 45.8 M20.3 4.5 Q11.3 3.5 11.3 12 V37.5 Q11.3 45.5 20.3 45.8 M7.3 26 H15.3" fill="none" stroke="#cfcfcf" stroke-width="7" stroke-linecap="round"/><path d="M2.3 4.5 Q11.3 3.5 11.3 12 V37.5 Q11.3 45.5 2.3 45.8 M20.3 4.5 Q11.3 3.5 11.3 12 V37.5 Q11.3 45.5 20.3 45.8 M7.3 26 H15.3" fill="none" stroke="#fff" stroke-width="5.5" stroke-linecap="round"/><path d="M2.3 4.5 Q11.3 3.5 11.3 12 V37.5 Q11.3 45.5 2.3 45.8 M20.3 4.5 Q11.3 3.5 11.3 12 V37.5 Q11.3 45.5 20.3 45.8 M7.3 26 H15.3" fill="none" stroke="#111" stroke-width="2.2"/><path d="M11.5 46 V59" stroke="#222" stroke-width="1"/></svg>
<div style="position:absolute;left:10.0px;top:0.0px;width:1710.0px;height:1.0px;background:#aebbe6;"></div>
<svg style="position:absolute;left:0.0px;top:0.0px;" width="12" height="12" viewBox="0 0 12 12"><path d="M0 0 H11 Q1 1 0 11 Z" fill="#141d33"/></svg>
<svg style="position:absolute;left:1718.0px;top:0.0px;" width="12" height="12" viewBox="0 0 12 12"><path d="M12 0 H1 Q11 1 12 11 Z" fill="#141d33"/></svg>
<svg style="position:absolute;left:0.0px;top:1068.0px;" width="12" height="12" viewBox="0 0 12 12"><path d="M0 12 H11 Q1 11 0 1 Z" fill="#141d33"/></svg>
<svg style="position:absolute;left:1718.0px;top:1068.0px;" width="12" height="12" viewBox="0 0 12 12"><path d="M12 12 H1 Q11 11 12 1 Z" fill="#141d33"/></svg>
<div style="position:absolute;left:19.5px;top:203.5px;width:1332.0px;height:7.5px;background:#f3f3f5;z-index:1;"></div>
<div style="position:absolute;left:306.0px;top:198.0px;width:1.0px;height:9.0px;background:#666;z-index:1;"></div>
<div style="position:absolute;left:388.5px;top:192.0px;width:1.5px;height:15.0px;background:#666;z-index:1;"></div>
<svg style="position:absolute;left:216.0px;top:183.0px;z-index:1;" width="16" height="28" viewBox="0 0 16 28"><path d="M2 1 H14 L8 8 Z M8 10 L14 17 V19 H2 V17 Z" fill="#fff" stroke="#444" stroke-width="1"/><rect x="2" y="20" width="12" height="6" rx="1.5" fill="#fff" stroke="#444" stroke-width="1"/></svg>
</div></body></html>
